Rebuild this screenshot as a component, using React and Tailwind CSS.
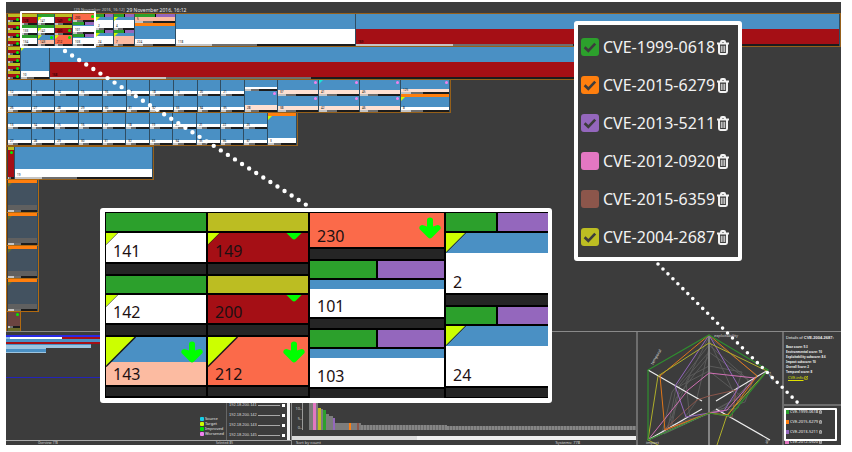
import React from "react";

const GREEN = "bg-[#2ca02c]";
const OLIVE = "bg-[#bcbd22]";
const PURPLE = "bg-[#9467bd]";
const BLUE = "bg-[#4a90c4]";
const RED = "bg-[#a50f15]";
const CORAL = "bg-[#fb6a4a]";
const SALMON = "bg-[#fcbba1]";
const BLUSH = "bg-[#fee0d2]";
const DARK = "bg-[#252525]";
const TRI = "[clip-path:polygon(0_0,100%_0,0_100%)]";

/* A split strip: two vulnerability colours side by side */
function Split({ className }) {
  return (
    <div className={`flex gap-px bg-black ${className}`}>
      <div className={`flex-1 ${GREEN}`} />
      <div className={`flex-1 ${PURPLE}`} />
    </div>
  );
}

function Progress() {
  return (
    <div className="flex h-[2px] bg-[#1c1c1c]">
      <div className="w-1/5 bg-[#c4c4c4]" />
      <div className="w-1/4 bg-[#6e6e6e]" />
    </div>
  );
}

function Tile({ cap, body, label, tri, dot, className = "flex-1" }) {
  return (
    <div className={`flex flex-col min-h-0 ${className}`}>
      {cap === "split" && <Split className="h-[3px] shrink-0" />}
      {cap && cap !== "split" && <div className={`h-[3px] shrink-0 ${cap}`} />}
      <div className="relative flex flex-1 flex-col min-h-0">
        {body.map((b, i) => (
          <div key={i} className={b} />
        ))}
        {label && <span className="absolute bottom-0 left-[2px] text-[3px] leading-[3px] text-black">{label}</span>}
        {tri && <span className={`absolute left-0 top-0 size-1 ${tri} ${TRI}`} />}
        {dot && <span className={`absolute right-px top-px size-[3px] rounded-full ${dot}`} />}
      </div>
      <Progress />
    </div>
  );
}

function Column({ className, children }) {
  return <div className={`flex flex-col min-w-0 border-r border-[#2f4d63] ${className}`}>{children}</div>;
}

function Row({ className, children }) {
  return <div className={`-mb-px flex h-[34px] border border-[#96601a] pl-px ${className}`}>{children}</div>;
}

const full = (c) => `flex-1 ${c}`;
const LIME = "bg-[#ccff00]";
const DOT = "bg-[#00f000]";

function Narrow() {
  return (
    <Column className="w-[13px] shrink-0">
      {[0, 1, 2, 3].map((i) => (
        <Tile key={i} cap={OLIVE} body={[full(RED)]} dot={DOT} />
      ))}
    </Column>
  );
}

function Pairs({ count, start, className }) {
  return (
    <div className={`flex ${className}`}>
      {Array.from({ length: count }, (_, i) => (
        <Column key={i} className="flex-1">
          <Tile body={[full(BLUE), "h-[3px] bg-white"]} label={String(start + i)} />
          <Tile body={[full(BLUE), "h-[3px] bg-white"]} label={String(start + i + 14)} />
        </Column>
      ))}
    </div>
  );
}

function TreeMap() {
  return (
    <section className="flex flex-col">
      <Row className="w-full">
        <Narrow />
        <Column className="w-[17px] shrink-0">
          <Tile cap={OLIVE} body={[full(RED)]} label="128" />
          <Tile cap={GREEN} body={[full("bg-white")]} label="133" />
          <Tile cap={GREEN} body={[full("bg-white")]} label="134" />
        </Column>
        <Column className="w-[17px] shrink-0">
          <Tile cap={GREEN} body={[full("bg-white")]} label="141" tri={LIME} />
          <Tile cap={GREEN} body={[full("bg-white")]} label="142" tri={LIME} />
          <Tile body={[full(BLUE), full(SALMON)]} label="143" tri={LIME} dot={DOT} />
        </Column>
        <Column className="w-[18px] shrink-0">
          <Tile cap={OLIVE} body={[full(RED)]} label="149" dot={DOT} />
          <Tile cap={OLIVE} body={[full(RED)]} label="200" dot={DOT} />
          <Tile body={[full(CORAL)]} label="212" tri={LIME} dot={DOT} />
        </Column>
        <Column className="w-[23px] shrink-0">
          <Tile className="h-2" body={[full(CORAL)]} label="230" dot={DOT} />
          <Tile cap="split" body={[`h-px ${BLUE}`, full("bg-white")]} label="101" />
          <Tile cap="split" body={[`h-px ${BLUE}`, full("bg-white")]} label="103" />
        </Column>
        <Column className="w-[18px] shrink-0">
          <Tile cap="split" body={[`h-[3px] ${BLUE}`, full("bg-white")]} label="2" tri={LIME} />
          <Tile cap="split" body={[`h-[3px] ${BLUE}`, full("bg-white")]} label="24" tri={LIME} />
        </Column>
        <Column className="w-[21px] shrink-0">
          <Tile cap="split" body={[`h-[3px] ${BLUE}`, full("bg-white")]} label="4" tri={LIME} />
          <Tile cap="split" body={[`h-[3px] ${BLUE}`, full(SALMON)]} label="7" tri={LIME} />
        </Column>
        <Column className="w-[41px] shrink-0">
          <Tile cap="split" className="h-[9px]" body={[full(SALMON)]} label="5" />
          <Tile cap="bg-[#ff7f0e]" body={[full(BLUE), "h-[5px] bg-white"]} label="224" />
        </Column>
        <Column className="w-[180px] shrink-0">
          <Tile body={[full(BLUE), full("bg-white")]} label="118" />
        </Column>
        <Column className="flex-1">
          <Tile body={[full(BLUE), full(RED)]} label="169" />
        </Column>
      </Row>
      <Row className="w-3/4">
        <Narrow />
        <Column className="w-[29px] shrink-0">
          <Tile body={[full(BLUE), "h-[6px] bg-white"]} label="10" tri={LIME} />
        </Column>
        <Column className="flex-1">
          <Tile body={[full(BLUE), full(RED)]} label="168" />
        </Column>
      </Row>
      <Row className="w-[445px]">
        <Pairs count={10} start={12} className="w-[237px]" />
        <Column className="w-[33px]">
          <Tile className="h-[11px]" body={[full(BLUE), "h-[2px] bg-white"]} />
          <Tile body={[full(BLUE), `h-[5px] ${BLUSH}`]} label="28" dot="bg-[#ee82ee]" />
        </Column>
        {[37, 41, 45].map((n) => (
          <Column key={n} className="w-[41px]">
            <Tile
              body={[full(BLUE), `h-1 ${BLUSH}`]}
              label={String(n)}
              dot="bg-[#ee82ee]"
              tri={n === 41 ? "bg-[#17e6d8]" : null}
            />
            <Tile body={[full(BLUE), `h-1 ${BLUSH}`]} label={String(n + 1)} dot="bg-[#ee82ee]" />
          </Column>
        ))}
        <Column className="flex-1">
          <Tile className="h-[14px]" body={[full(BLUE), `h-[3px] ${BLUSH}`]} label="125" dot="bg-[#ee82ee]" />
          <Tile cap="bg-[#ff7f0e]" body={[full(BLUE), "h-[3px] bg-white"]} tri={LIME} label="8" />
        </Column>
      </Row>
      <Row className="w-[292px]">
        <Pairs count={11} start={13} className="w-[260px]" />
        <Column className="flex-1">
          <Tile cap="bg-[#ff7f0e]" body={[full(BLUE), "h-[5px] bg-white"]} tri={LIME} label="3" />
        </Column>
      </Row>
      <Row className="mt-px w-[148px]">
        <Column className="w-[7px]">
          <Tile cap={OLIVE} body={[full(RED)]} dot={DOT} />
        </Column>
        <Column className="flex-1">
          <Tile body={[full(BLUE), "h-2 bg-white"]} label="19" />
        </Column>
      </Row>
      {[0, 1, 2, 3].map((i) => (
        <Row key={i} className="w-[33px] border-[#b26a10]">
          <Column className="flex-1">
            <Tile cap="bg-[#ff7f0e]" body={[full("bg-[#435260]"), "h-[5px] bg-[#606060]"]} tri="bg-[#5d6f30]" />
          </Column>
        </Row>
      ))}
      <div className="flex h-5 w-[15px] flex-col border border-b-0 border-[#b26a10] pl-px">
        <Tile className="h-4" body={[full("bg-[#6b4440]")]} dot={DOT} />
        <div className="flex-1 bg-[#6a6a28]" />
      </div>
    </section>
  );
}

function Trash({ className }) {
  return (
    <svg viewBox="0 0 12 15" className={className} fill="none" stroke="currentColor" strokeWidth="2">
      <path d="M0 3.5H12M4 3V2Q4 1 5 1H7Q8 1 8 2V3M2 4V12.6Q2 14 3.4 14H8.6Q10 14 10 12.6V4" />
      <path d="M4.3 5.8V12M6 5.8V12M7.7 5.8V12" strokeWidth="0.9" />
    </svg>
  );
}

const cves = [
  { id: "CVE-1999-0618", color: "bg-[#2ca02c]", on: true },
  { id: "CVE-2015-6279", color: "bg-[#ff7f0e]", on: true },
  { id: "CVE-2013-5211", color: "bg-[#9467bd]", on: true },
  { id: "CVE-2012-0920", color: "bg-[#e377c2]", on: false },
  { id: "CVE-2015-6359", color: "bg-[#8c564b]", on: false },
  { id: "CVE-2004-2687", color: "bg-[#bcbd22]", on: true },
];

function CveCallout() {
  return (
    <ul className="absolute left-[574px] top-[21px] flex w-[168px] flex-col gap-[14px] rounded-[3px] border-4 border-white bg-[#3c3c3c] pb-2 pl-[3px] pt-[10px]">
      {cves.map((c) => (
        <li key={c.id} className="flex h-6 items-center text-[#f2f2f2]">
          <label className="flex items-center gap-1 text-[16px] leading-6">
            <span className="grid">
              <input
                type="checkbox"
                defaultChecked={c.on}
                className={`col-start-1 row-start-1 size-[18px] appearance-none rounded-[3px] ${c.color}`}
              />
              {c.on && (
                <svg viewBox="0 0 18 18" className="pointer-events-none col-start-1 row-start-1 size-[18px]">
                  <path d="M3.6 9.2L7.3 12.8L14.2 5.6" fill="none" stroke="#3c3c3c" strokeWidth="2.6" />
                </svg>
              )}
            </span>
            {c.id}
          </label>
          <button aria-label={`Remove ${c.id}`} className="ml-[2px]">
            <Trash className="h-[15px] w-3" />
          </button>
        </li>
      ))}
    </ul>
  );
}

function Arrow({ cut }) {
  return (
    <svg
      viewBox={cut ? "0 15 22 7" : "0 0 22 22"}
      className={cut ? "absolute right-[3px] top-0 h-[7px] w-[22px]" : "absolute right-[3px] top-1 size-[22px]"}
    >
      <path
        d="M8 3Q8 0.5 11 0.5T14 3V9.5L18.5 8Q22.5 8.5 21.5 12L13 20.5Q11 22.5 9 20.5L0.5 12Q-0.5 8.5 3.5 8L8 9.5Z"
        fill="#00ff00"
      />
    </svg>
  );
}

function Corner({ className }) {
  return (
    <svg viewBox="0 0 30 30" className={`absolute left-0 top-0 ${className}`}>
      <path d="M0 0H29L0 29Z" fill="#ccff00" />
      <path d="M29.5 0L0 29.5" stroke="#1a1a1a" strokeWidth="1.5" />
    </svg>
  );
}

function BigCell({ label, className, corner, arrow, top, cut }) {
  return (
    <div className={`relative flex flex-col justify-end ${className}`}>
      {top && <div className={`absolute inset-x-0 top-0 ${top}`} />}
      {corner && <Corner className={corner} />}
      {arrow && <Arrow cut={cut} />}
      <span className="relative pb-px pl-[7px] text-[16px] leading-[20px] text-[#1c1012]">{label}</span>
    </div>
  );
}

const Gap = ({ className = "h-[10px]" }) => <div className={`${DARK} ${className}`} />;

function BigSplit({ className }) {
  return (
    <div className={`flex gap-[2px] ${className}`}>
      <div className={`flex-1 ${GREEN}`} />
      <div className={`flex-1 ${PURPLE}`} />
    </div>
  );
}

function TileCallout() {
  const col = "flex flex-col gap-[2px]";
  return (
    <div className="absolute left-[100px] top-[208px] w-[452px] rounded-[3px] border-[5px] border-t-4 border-r-4 border-white">
      <div className="grid grid-cols-[100px_100px_134px_1fr] gap-[2px] bg-black pl-px pt-px">
        <div className={col}>
          <div className={`h-[18px] ${GREEN}`} />
          <BigCell label="141" className="h-[29px] bg-white" corner="size-3" />
          <Gap />
          <div className={`h-[17px] ${GREEN}`} />
          <BigCell label="142" className="h-[28px] bg-white" corner="size-3" />
          <Gap />
          <BigCell label="143" className={`h-12 ${SALMON}`} top={`h-[25px] ${BLUE}`} corner="size-[30px]" arrow />
          <Gap className="h-[9px]" />
        </div>
        <div className={col}>
          <div className={`h-[18px] ${OLIVE}`} />
          <BigCell label="149" className={`h-[29px] ${RED}`} corner="size-3" arrow cut />
          <Gap />
          <div className={`h-[17px] ${OLIVE}`} />
          <BigCell label="200" className={`h-[28px] ${RED}`} arrow cut />
          <Gap />
          <BigCell label="212" className={`h-12 ${CORAL}`} corner="size-[30px]" arrow />
          <Gap className="h-[9px]" />
        </div>
        <div className={col}>
          <BigCell label="230" className={`h-[34px] ${CORAL}`} arrow />
          <Gap />
          <BigSplit className="h-[17px]" />
          <BigCell label="101" className="h-[37px] bg-white" top={`h-[9px] ${BLUE}`} />
          <Gap className="h-[9px]" />
          <BigSplit className="h-[17px]" />
          <BigCell label="103" className="h-[38px] bg-white" top={`h-[9px] ${BLUE}`} />
          <Gap className="h-[9px]" />
        </div>
        <div className={col}>
          <BigSplit className="h-[18px]" />
          <BigCell label="2" className="h-[60px] bg-white" top={`h-5 ${BLUE}`} corner="size-5" />
          <Gap />
          <BigSplit className="h-[17px]" />
          <BigCell label="24" className="h-[60px] bg-white" top={`h-5 ${BLUE}`} corner="size-5" />
          <Gap className="h-[9px]" />
        </div>
      </div>
    </div>
  );
}

const legend = [
  ["Source", "bg-[#17cfe6]"],
  ["Target", "bg-[#ccff00]"],
  ["Improved", "bg-[#00e000]"],
  ["Worsened", "bg-[#ee82ee]"],
];

function Overview() {
  return (
    <div className="flex w-[285px] shrink-0 flex-col">
      <div className="h-[46px] shrink-0 border-b border-[#2424b8] pt-[3px]">
        <div className="h-[2px] bg-[#2a2ae6]" />
        <div className="flex h-[2px]">
          <div className="w-1 bg-[#8fc0e4]" />
          <div className="w-[52px] bg-white" />
          <div className="flex-1 bg-[#a50f15]" />
        </div>
        <div className="h-[3px] bg-[#4a90c4]" />
        <div className="h-[2px] bg-[#a50f15]" />
        <div className="h-1 w-[85px] bg-[#9cc4e0]">
          <div className="h-px bg-[#4a90c4]" />
        </div>
        <div className="h-[5px] w-10 border-y border-[#9cc4e0] bg-[#4a90c4]" />
      </div>
      <div className="flex min-h-0 flex-1 justify-end border-b border-[#a8a8a8]">
        <div className="flex flex-col justify-end gap-px pb-1 pr-[2px]">
          {legend.map(([name, color]) => (
            <div key={name} className="flex items-center gap-px text-[4px] leading-[4px] text-[#e6e6e6]">
              <span className={`size-1 rounded-[1px] ${color}`} />
              {name}
            </div>
          ))}
        </div>
        <ul className="flex w-[61px] flex-col justify-end gap-[4px] border-l border-[#666] pb-[2px] pl-[2px] pr-[2px] font-['Liberation_Sans',sans-serif]">
          {["141", "142", "143", "145"].map((n) => (
            <li key={n} className="flex h-[6px] items-center justify-between text-[4px] leading-[6px] text-[#dcdcdc]">
              192.18.200.{n}
              <span className="h-px w-[22px] bg-[#a8a8a8]" />
              <button aria-label={`Remove 192.18.200.${n}`} className="size-[3px] bg-white" />
            </li>
          ))}
        </ul>
        <div className="mr-px w-[3px] bg-[#f2f2f2]" />
      </div>
      <div className="flex h-1 justify-between pl-8 pr-[58px] text-[3px] leading-[4px] text-[#d8d8d8]">
        <span>Overview: 778</span>
        <span>Selected: 85</span>
      </div>
    </div>
  );
}

const bars = [
  [32, 4, "#7c7c7c"], [32, 3, "#e377c2"], [32, 2, "#7c7c7c"], [22, 3, "#bcbd22"], [21, 2, "#7c7c7c"],
  [20, 3, "#2ca02c"], [16, 3, "#7c7c7c"], [14, 4, "#7c7c7c"], [12, 2, "#9467bd"], [7, 14, "#7c7c7c"],
  [7, 2, "#ff7f0e"], [7, 6, "#7c7c7c"], [7, 2, "#8c564b"], [7, 2, "#7c7c7c"],
];

function Histogram() {
  return (
    <div className="flex min-w-0 flex-1 flex-col justify-end border-l border-[#8a8a8a]">
      <div className="flex items-end pb-[6px]">
        <div className="flex h-8 w-[10px] flex-col justify-between text-right text-[4px] leading-[4px] text-[#d0d0d0]">
          <span>15–</span>
          <span>10–</span>
          <span>5–</span>
          <span>0–</span>
        </div>
        <div className="mr-[6px] h-[30px] w-px bg-[#9a9a9a]" />
        {bars.map(([h, w, color], i) => (
          <div key={i} className="shrink-0" style={{ height: h, width: w, backgroundColor: color }} />
        ))}
        <div className="h-[5px] w-[86px] bg-[repeating-linear-gradient(90deg,#858585_0_2px,#6b6b6b_2px_3px)]" />
        <div className="h-1 flex-1 bg-[repeating-linear-gradient(90deg,#858585_0_2px,#6b6b6b_2px_3px)]" />
      </div>
      <div className="h-1 bg-[#f0f0f0]">
        <div className="h-full w-[125px] bg-[#dadada]" />
      </div>
      <div className="flex h-[5px] justify-between pl-1 pr-[56px] text-[4px] leading-[5px] text-[#d8d8d8]">
        <span>Sort by count</span>
        <span>Systems: 778</span>
      </div>
    </div>
  );
}

function Radar() {
  return (
    <div className="w-[146px] shrink-0 border-l-2 border-[#6e6e6e]">
      <svg viewBox="638 332 144 113" className="block h-full w-full" fill="none" strokeWidth="1">
        <g stroke="#5a5a5a">
          <path d="M709 345L672 392L662 433L709 413L745 402L752 383Z" />
          <path d="M709 352L680 385L672 425L709 413L738 408L748 380Z" />
          <path d="M709 366L690 376L664 434L709 413L733 400L742 372Z" />
          <path d="M709 371L676 388L668 428L709 414L741 396Z" />
          <path d="M709 337L686 382L690 420L709 413L724 408L758 376Z" />
          <path d="M709 348L696 402L680 424M709 340L724 372L738 402M709 356L676 398L670 430" />
        </g>
        <path d="M709 335V445" stroke="#858585" strokeWidth="2" />
        <path d="M648 370L702 401M768 370L716 401M648 440L702 409M716 409L770 440" stroke="#ededed" strokeWidth="1.2" />
        <path d="M709 396L736 390L732 417L709 413L664 430L688 408L697 400Z" stroke="#8c564b" />
        <path d="M709 335L739 387L724 411L709 413L686 417L675 386Z" stroke="#9467bd" />
        <path d="M709 373L755 378L727 410L709 413L648 440L688 390Z" stroke="#d070b4" />
        <path d="M709 335L757 376L728 415L709 413L665 430L660 376Z" stroke="#e0761a" />
        <path d="M709 343L767 371L727 415L717 445M709 343L658 376L648 440L660 446" stroke="#aeae2a" />
        <path d="M709 335L768 370L730 416L709 413L648 440V370Z" stroke="#2f8f2f" strokeWidth="1.2" />
        <g fill="#d8d8d8" fontSize="4">
          <text x="714" y="337">exploitability</text>
          <text x="646" y="444">impact</text>
          <text x="653" y="365" transform="rotate(-60 653 365)">temporal</text>
          <text x="768" y="373" transform="rotate(60 768 373)">base</text>
          <text x="767" y="444" transform="rotate(-60 767 444)">all</text>
        </g>
      </svg>
    </div>
  );
}

function Details() {
  return (
    <div className="flex w-[59px] shrink-0 flex-col border-l-2 border-[#6e6e6e]">
      <div className="h-[74px] shrink-0 border-b-2 border-[#6e6e6e] pl-[2px] pt-[3px] text-[#ececec]">
        <h2 className="whitespace-nowrap font-['Liberation_Sans',sans-serif] text-[4px] leading-[6px]">
          Details of <b>CVE-2004-2687:</b>
        </h2>
        <div className="pt-1 text-[3px] font-bold leading-[5px]">
          <p>Base score: 9.3</p>
          <p>Environmental score: 10</p>
          <p>Exploitability subscore: 8.6</p>
          <p>Impact subscore: 10</p>
          <p>Overall Score: 2</p>
          <p>Temporal score: 8</p>
        </div>
        <a href="#cve" className="flex items-center pl-[2px] text-[4px] leading-[6px] text-[#dfe000] underline">
          CVE.info
          <svg viewBox="0 0 6 6" className="size-1" fill="none" stroke="currentColor">
            <path d="M3 1H1V5H5V3M3.5 0.5H5.5V2.5M5.5 0.5L2.5 3.5" />
          </svg>
        </a>
      </div>
      <ul className="flex flex-col gap-1 overflow-hidden pl-px pt-[3px]">
        {cves.slice(0, 4).map((c) => (
          <li key={c.id} className="flex h-[6px] items-center gap-px text-[4px] leading-[6px] text-[#f4f4f4]">
            <label className="flex items-center gap-px">
              <input type="checkbox" defaultChecked={c.on} className={`size-1 appearance-none ${c.color}`} />
              {c.id}
            </label>
            <button aria-label={`Remove ${c.id} from list`}>
              <Trash className="h-1 w-[3px]" />
            </button>
          </li>
        ))}
      </ul>
    </div>
  );
}

export default function App() {
  return (
    <div className="relative bg-white pb-[7px] pl-[6px] pr-[11px] pt-[2px] font-['Noto_Sans','Open_Sans',sans-serif]">
      <main className="overflow-hidden bg-[#3c3c3c]">
        <header className="flex h-[11px] items-center gap-[2px] pl-[68px] pt-1 text-[#f0f0f0]">
          <span className="text-[4px] leading-[6px] text-[#c8c8c8]">[29 November 2016, 16:12]</span>
          <h1 className="text-[5px] leading-[6px]">29 November 2016, 16:12</h1>
        </header>
        <TreeMap />
        <section className="flex h-[114px] border-t border-[#8a8a8a]">
          <Overview />
          <Histogram />
          <Radar />
          <Details />
        </section>
      </main>

      <svg viewBox="0 0 852 452" className="pointer-events-none absolute left-0 top-0 h-[452px] w-[852px]" fill="none" stroke="#fff" strokeLinecap="round">
        <path d="M65 51L308 206" strokeWidth="4.4" strokeDasharray="0 8.4" />
        <path d="M658 264L798 403" strokeWidth="3.6" strokeDasharray="0 7" />
      </svg>
      <div className="absolute left-5 top-[11px] h-[37px] w-[76px] rounded-[1px] border-2 border-white" />
      <div className="absolute left-[784px] top-[408px] h-[33px] w-[53px] rounded-[1px] border-2 border-white" />
      <TileCallout />
      <CveCallout />
    </div>
  );
}
